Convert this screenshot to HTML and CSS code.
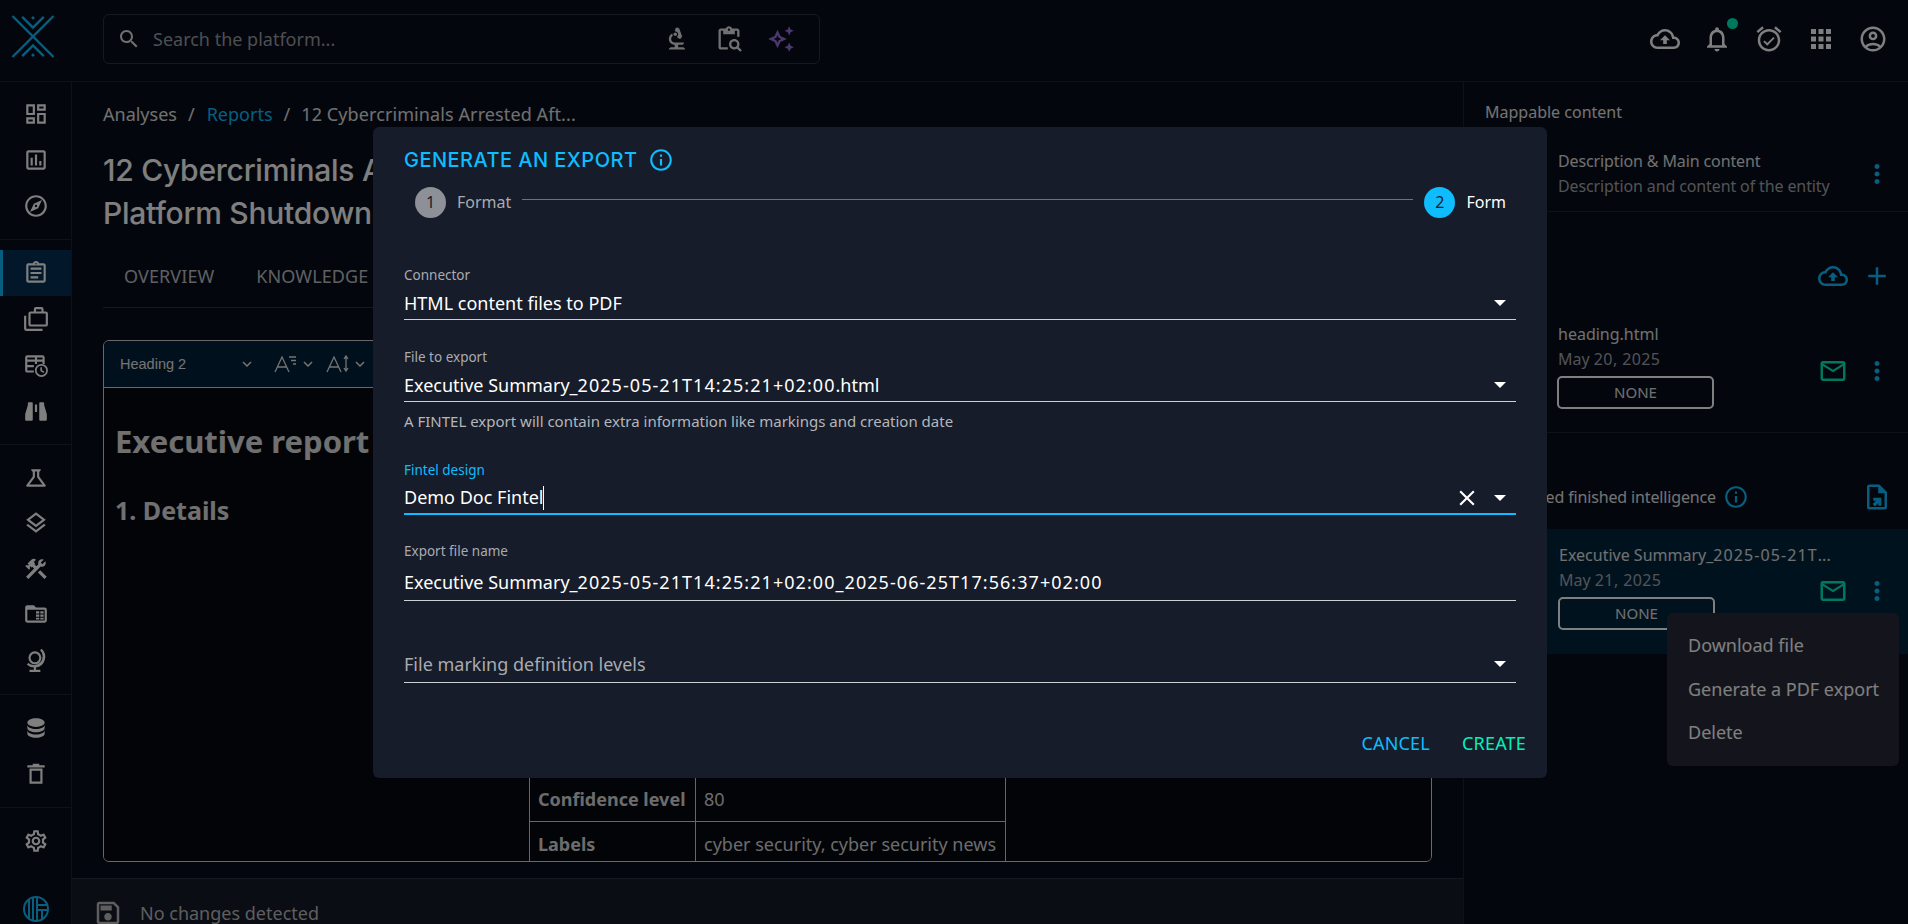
FILE: index.html
```html
<!DOCTYPE html>
<html lang="en">
<head>
<meta charset="utf-8">
<title>Generate an export</title>
<link rel="stylesheet" href="styles.css">
</head>
<body>
<div class="app">
  <header class="topbar">
    <div class="logo-cell">
      <svg class="logo" viewBox="0 0 46 46"><path d="M2 2 44 44M44 2 2 44M12 3 23 14 34 3M12 43 23 32 34 43" fill="none" stroke="#0fbcff" stroke-width="2.4"/><path d="M23 2l2 2-2 2-2-2zM23 40l2 2-2 2-2-2z" fill="#0fbcff"/></svg>
    </div>
    <div class="search">
      <svg class="ic24" viewBox="0 0 24 24"><path d="M15.5 14h-.79l-.28-.27C15.41 12.59 16 11.11 16 9.5 16 5.91 13.09 3 9.5 3S3 5.91 3 9.5 5.91 16 9.5 16c1.61 0 3.09-.59 4.23-1.57l.27.28v.79l5 4.99L20.49 19l-4.99-5zm-6 0C7.01 14 5 11.99 5 9.5S7.01 5 9.5 5 14 7.01 14 9.5 11.99 14 9.5 14z"/></svg>
      <span class="search-text">Search the platform...</span>
      <span class="search-tools">
        <svg class="ic28" viewBox="0 0 24 24"><path d="M7 19c-1.1 0-2 .9-2 2h14c0-1.1-.9-2-2-2h-4v-2h3c1.1 0 2-.9 2-2h-8c-1.66 0-3-1.34-3-3 0-1.09.59-2.04 1.46-2.56C8.17 9.03 8 8.54 8 8c0-.21.04-.42.09-.62C6.28 8.13 5 9.92 5 12c0 2.76 2.24 5 5 5v2H7zM10.56 5.51C11.91 5.54 13 6.64 13 8c0 .75-.33 1.41-.85 1.87l.59 1.62.94-.34.34.94 1.88-.68-.34-.94.94-.34-2.74-7.52-.94.34-.34-.94-1.88.68.34.94-.94.35.56 1.53z"/><circle cx="10.5" cy="8" r="1.5"/></svg>
        <svg class="ic28" viewBox="0 0 24 24"><path d="M5 5h2v3h10V5h2v5h2V5c0-1.1-.9-2-2-2h-4.18C14.4 1.84 13.3 1 12 1s-2.4.84-2.82 2H5c-1.1 0-2 .9-2 2v14c0 1.1.9 2 2 2h6v-2H5V5zm7-2c.55 0 1 .45 1 1s-.45 1-1 1-1-.45-1-1 .45-1 1-1zM20.3 18.9c.4-.7.7-1.5.7-2.4 0-2.5-2-4.5-4.5-4.5S12 14 12 16.5s2 4.5 4.5 4.5c.9 0 1.7-.3 2.4-.7l2.7 2.7 1.4-1.4-2.7-2.7zm-3.8.1c-1.4 0-2.5-1.1-2.5-2.5s1.1-2.5 2.5-2.5 2.5 1.1 2.5 2.5-1.1 2.5-2.5 2.5z"/></svg>
        <svg class="ic28 purple" viewBox="0 0 24 24"><path d="m19 9 1.25-2.75L23 5l-2.75-1.25L19 1l-1.25 2.75L15 5l2.75 1.25L19 9zm-7.5.5L9 4 6.5 9.5 1 12l5.5 2.5L9 20l2.5-5.5L17 12l-5.5-2.5zm-1.51 3.49L9 15.17l-.99-2.18L5.83 12l2.18-.99L9 8.83l.99 2.18 2.18.99-2.18.99zM19 15l-1.25 2.75L15 19l2.75 1.25L19 23l1.25-2.75L23 19l-2.75-1.25L19 15z"/></svg>
      </span>
    </div>
    <div class="top-actions">
      <svg class="ic30" viewBox="0 0 24 24"><path d="M19.35 10.04C18.67 6.59 15.64 4 12 4 9.11 4 6.6 5.64 5.35 8.04 2.34 8.36 0 10.91 0 14c0 3.31 2.69 6 6 6h13c2.76 0 5-2.24 5-5 0-2.64-2.05-4.78-4.65-4.96zM19 18H6c-2.21 0-4-1.79-4-4 0-2.05 1.53-3.76 3.56-3.97l1.07-.11.5-.95C8.08 7.14 9.94 6 12 6c2.62 0 4.88 1.86 5.39 4.43l.3 1.5 1.53.11c1.56.1 2.78 1.41 2.78 2.96 0 1.65-1.35 3-3 3zM8 13h2.55v3h2.9v-3H16l-4-4z"/></svg>
      <span class="bell">
        <svg class="ic30" viewBox="0 0 24 24"><path d="M12 22c1.1 0 2-.9 2-2h-4c0 1.1.9 2 2 2zm6-6v-5c0-3.07-1.63-5.64-4.5-6.32V4c0-.83-.67-1.5-1.5-1.5s-1.5.67-1.5 1.5v.68C7.64 5.36 6 7.92 6 11v5l-2 2v1h16v-1l-2-2zm-2 1H8v-6c0-2.48 1.51-4.5 4-4.5s4 2.02 4 4.5v6z"/></svg>
        <i class="dot"></i>
      </span>
      <svg class="ic30" viewBox="0 0 24 24"><path d="M16.54 11.4l-1.06-1.06-4.88 4.88-2.12-2.12-1.06 1.06 3.18 3.18zM22 5.72l-4.6-3.86-1.29 1.53 4.6 3.86zM7.88 3.39 6.6 1.86 2 5.71l1.29 1.53zM12 4c-4.97 0-9 4.03-9 9s4.03 9 9 9 9-4.03 9-9-4.03-9-9-9zm0 16c-3.86 0-7-3.14-7-7s3.14-7 7-7 7 3.14 7 7-3.14 7-7 7z"/></svg>
      <svg class="ic30" viewBox="0 0 24 24"><path d="M4 8h4V4H4v4zm6 12h4v-4h-4v4zm-6 0h4v-4H4v4zm0-6h4v-4H4v4zm6 0h4v-4h-4v4zm6-10v4h4V4h-4zm-6 4h4V4h-4v4zm6 6h4v-4h-4v4zm0 6h4v-4h-4v4z"/></svg>
      <svg class="ic30" viewBox="0 0 24 24"><path d="M12 2C6.48 2 2 6.48 2 12s4.48 10 10 10 10-4.48 10-10S17.52 2 12 2zM7.35 18.5C8.66 17.56 10.26 17 12 17s3.34.56 4.65 1.5c-1.31.94-2.91 1.5-4.65 1.5s-3.34-.56-4.65-1.5zm10.79-1.38C16.45 15.8 14.32 15 12 15s-4.45.8-6.14 2.12C4.7 15.73 4 13.95 4 12c0-4.42 3.58-8 8-8s8 3.58 8 8c0 1.95-.7 3.73-1.86 5.12zM12 6c-1.93 0-3.5 1.57-3.5 3.5S10.07 13 12 13s3.5-1.57 3.5-3.5S13.93 6 12 6zm0 5c-.83 0-1.5-.67-1.5-1.5S11.17 8 12 8s1.5.67 1.5 1.5S12.83 11 12 11z"/></svg>
    </div>
  </header>

  <div class="body">
    <nav class="sidebar">
      <div class="nav-group first">
        <div class="nav-row"><svg class="ic26" viewBox="0 0 24 24"><path d="M19 5v2h-4V5h4M9 5v6H5V5h4m10 8v6h-4v-6h4M9 17v2H5v-2h4M21 3h-8v6h8V3zM11 3H3v10h8V3zm10 8h-8v10h8V11zm-10 4H3v6h8v-6z"/></svg></div>
        <div class="nav-row"><svg class="ic26" viewBox="0 0 24 24"><path d="M19 3H5c-1.1 0-2 .9-2 2v14c0 1.1.9 2 2 2h14c1.1 0 2-.9 2-2V5c0-1.1-.9-2-2-2zm0 16H5V5h14v14zM7 10h2v7H7zm4-3h2v10h-2zm4 6h2v4h-2z"/></svg></div>
        <div class="nav-row"><svg class="ic26" viewBox="0 0 24 24"><path d="M12 2C6.48 2 2 6.48 2 12s4.48 10 10 10 10-4.48 10-10S17.52 2 12 2zm0 18c-4.41 0-8-3.59-8-8s3.59-8 8-8 8 3.59 8 8-3.59 8-8 8zm-5.5-2.5l7.51-3.49L17.5 6.5 9.99 9.99 6.5 17.5zm5.5-6.6c.61 0 1.1.49 1.1 1.1s-.49 1.1-1.1 1.1-1.1-.49-1.1-1.1.49-1.1 1.1-1.1z"/></svg></div>
      </div>
      <div class="nav-group">
        <div class="nav-row active"><svg class="ic26" viewBox="0 0 24 24"><path d="M7 15h7v2H7zm0-4h10v2H7zm0-4h10v2H7zm12-4h-4.18C14.4 1.84 13.3 1 12 1c-1.3 0-2.4.84-2.82 2H5c-.14 0-.27.01-.4.04-.39.08-.74.28-1.01.55-.18.18-.33.4-.43.64-.1.23-.16.49-.16.77v14c0 .27.06.54.16.78s.25.45.43.64c.27.27.62.47 1.01.55.13.02.26.03.4.03h14c1.1 0 2-.9 2-2V5c0-1.1-.9-2-2-2zm-7-.25c.41 0 .75.34.75.75s-.34.75-.75.75-.75-.34-.75-.75.34-.75.75-.75zM19 19H5V5h14v14z"/></svg></div>
        <div class="nav-row"><svg class="ic26" viewBox="0 0 24 24"><path d="M19 5V3a2 2 0 0 0-2-2h-5a2 2 0 0 0-2 2v2H7a2 2 0 0 0-2 2v10a2 2 0 0 0 2 2h14a2 2 0 0 0 2-2V7a2 2 0 0 0-2-2h-2zm-7-2h5v2h-5V3zM7 7h14v10H7V7zM1 9h2v12h15v2H3a2 2 0 0 1-2-2V9z"/></svg></div>
        <div class="nav-row"><svg class="ic26 even" viewBox="0 0 24 24"><path d="M4 3h14a2 2 0 0 1 2 2v6h-2V9h-5v2h-2V9H4v3h6v2H4v3h6v2H4a2 2 0 0 1-2-2V5a2 2 0 0 1 2-2zM4 5v2h7V5zM13 5v2h5V5z"/><path d="M17 11a6 6 0 1 0 0 12 6 6 0 0 0 0-12zm0 10.400a4.400 4.400 0 1 1 0-8.800 4.400 4.400 0 0 1 0 8.800zM17.500 14H16v3.600l2.800 1.700.8-1.200-2.100-1.300z"/></svg></div>
        <div class="nav-row"><svg class="ic26" viewBox="0 0 24 24"><path d="M11,6H13V13H11V6M9,20A1,1 0 0,1 8,21H3A1,1 0 0,1 2,20V15L4.500,6.500V4.500L5,4H8.500L9,4.500V20M15,20V4.500L15.500,4H19L19.500,4.500V6.500L22,15V20A1,1 0 0,1 21,21H16A1,1 0 0,1 15,20Z"/></svg></div>
      </div>
      <div class="nav-group dense">
        <div class="nav-row"><svg class="ic26" viewBox="0 0 24 24"><path d="M13 11.33 18 18H6l5-6.67V6h2m2.96-2H8.04c-.42 0-.65.48-.39.81L9 6.5v4.17L3.2 18.4c-.49.66-.02 1.6.8 1.6h16c.82 0 1.29-.94.8-1.6L15 10.67V6.5l1.35-1.69c.26-.33.03-.81-.39-.81z"/></svg></div>
        <div class="nav-row"><svg class="ic26" viewBox="0 0 24 24"><path d="m11.99 18.54-7.37-5.73L3 14.07l9 7 9-7-1.63-1.27zM12 16l7.36-5.73L21 9l-9-7-9 7 1.63 1.27L12 16zm0-11.47L17.74 9 12 13.47 6.26 9 12 4.53z"/></svg></div>
        <div class="nav-row"><svg class="ic26" viewBox="0 0 24 24"><path d="m13.7826 15.1719 2.1213-2.1213 5.9963 5.9962-2.1213 2.1213zM17.5 10c1.93 0 3.5-1.57 3.5-3.5 0-.58-.16-1.12-.41-1.6l-2.7 2.7-1.49-1.49 2.7-2.7c-.48-.25-1.02-.41-1.6-.41C15.57 3 14 4.57 14 6.5c0 .41.08.8.21 1.16l-1.85 1.85-1.78-1.78.71-.71-1.41-1.41L12 3.49c-1.17-1.17-3.07-1.17-4.24 0L4.22 7.03l1.41 1.41H2.81l-.71.71 3.54 3.54.71-.71V9.15l1.41 1.41.71-.71 1.78 1.78-7.41 7.41 2.12 2.12L16.34 9.79c.36.13.75.21 1.16.21z"/></svg></div>
        <div class="nav-row"><svg class="ic26 even" viewBox="0 0 24 24"><path d="M4 4h6l2 2h8a2 2 0 0 1 2 2v10a2 2 0 0 1-2 2H4a2 2 0 0 1-2-2V6a2 2 0 0 1 2-2zM4 8v10h16V8zM12 9.500h3v2h-3zM16 9.500h3v2h-3zM12 12.500h3v2h-3zM16 12.500h3v2h-3zM12 15.500h3v1.500h-3zM16 15.500h3v1.500h-3z"/></svg></div>
        <div class="nav-row"><svg class="ic26" viewBox="0 0 24 24"><path d="M11 4a6 6 0 1 0 0 12 6 6 0 0 0 0-12zm0 2a4 4 0 1 1 0 8 4 4 0 0 1 0-8zM17.200 1.600l-1.400 1.400a8 8 0 0 1-10.900 11.700l-1.400 1.400A10 10 0 0 0 10 19v2H6v2h10v-2h-4v-2.100A10 10 0 0 0 17.200 1.600z"/></svg></div>
      </div>
      <div class="nav-group">
        <div class="nav-row"><svg class="ic26" viewBox="0 0 24 24"><path d="M12,3C7.58,3 4,4.79 4,7C4,9.21 7.58,11 12,11C16.42,11 20,9.21 20,7C20,4.79 16.42,3 12,3M4,9V12C4,14.21 7.58,16 12,16C16.42,16 20,14.21 20,12V9C20,11.21 16.42,13 12,13C7.58,13 4,11.21 4,9M4,14V17C4,19.21 7.58,21 12,21C16.42,21 20,19.21 20,17V14C20,16.21 16.42,18 12,18C7.58,18 4,16.21 4,14Z"/></svg></div>
        <div class="nav-row"><svg class="ic26 even" viewBox="0 0 24 24"><path d="M4 4h16v2H4zM6 7h12v14H6zM8 9v10h8V9zM9 2.500h6V4H9z"/></svg></div>
      </div>
      <div class="nav-group last">
        <div class="nav-row"><svg class="ic26" viewBox="0 0 24 24"><path d="M19.43 12.98c.04-.32.07-.64.07-.98 0-.34-.03-.66-.07-.98l2.11-1.65c.19-.15.24-.42.12-.64l-2-3.46c-.09-.16-.26-.25-.44-.25-.06 0-.12.01-.17.03l-2.49 1c-.52-.4-1.08-.73-1.69-.98l-.38-2.65C14.46 2.18 14.25 2 14 2h-4c-.25 0-.46.18-.49.42l-.38 2.65c-.61.25-1.17.59-1.69.98l-2.49-1c-.06-.02-.12-.03-.18-.03-.17 0-.34.09-.43.25l-2 3.46c-.13.22-.07.49.12.64l2.11 1.65c-.04.32-.07.65-.07.98 0 .33.03.66.07.98l-2.11 1.65c-.19.15-.24.42-.12.64l2 3.46c.09.16.26.25.44.25.06 0 .12-.01.17-.03l2.49-1c.52.4 1.08.73 1.69.98l.38 2.65c.03.24.24.42.49.42h4c.25 0 .46-.18.49-.42l.38-2.65c.61-.25 1.17-.59 1.69-.98l2.49 1c.06.02.12.03.18.03.17 0 .34-.09.43-.25l2-3.46c.12-.22.07-.49-.12-.64l-2.11-1.65zm-1.98-1.71c.04.31.05.52.05.73 0 .21-.02.43-.05.73l-.14 1.13.89.7 1.08.84-.7 1.21-1.27-.51-1.04-.42-.9.68c-.43.32-.84.56-1.25.73l-1.06.43-.16 1.13-.2 1.35h-1.4l-.19-1.35-.16-1.13-1.06-.43c-.43-.18-.83-.41-1.23-.71l-.91-.7-1.06.43-1.27.51-.7-1.21 1.08-.84.89-.7-.14-1.13c-.03-.31-.05-.54-.05-.74s.02-.43.05-.73l.14-1.13-.89-.7-1.08-.84.7-1.21 1.27.51 1.04.42.9-.68c.43-.32.84-.56 1.25-.73l1.06-.43.16-1.13.2-1.35h1.39l.19 1.35.16 1.13 1.06.43c.43.18.83.41 1.23.71l.91.7 1.06-.43 1.27-.51.7 1.21-1.07.85-.89.7.14 1.13zM12 8c-2.21 0-4 1.79-4 4s1.79 4 4 4 4-1.79 4-4-1.79-4-4-4zm0 6c-1.1 0-2-.9-2-2s.9-2 2-2 2 .9 2 2-.9 2-2 2z"/></svg></div>
        <svg class="brand" viewBox="0 0 26 26"><circle cx="13" cy="13" r="12" fill="none" stroke="#0fbcff" stroke-width="2"/><path d="M6 4v18M10 2v22M14 2v22M14 9h11M14 14h10M19 14v9" fill="none" stroke="#0fbcff" stroke-width="2"/></svg>
      </div>
    </nav>

    <main class="main">
      <div class="main-scroll">
        <div class="crumbs"><span>Analyses</span><span class="sep">/</span><span class="crumb-link">Reports</span><span class="sep">/</span><span class="crumb-cur">12 Cybercriminals Arrested Aft...</span></div>
        <h1 class="title">12 Cybercriminals Arrested After Silk Road-Like Dark Web Drug<br>Platform Shutdown</h1>
        <div class="tabs"><span>OVERVIEW</span><span>KNOWLEDGE</span><span>CONTENT</span></div>
        <section class="editor">
          <div class="toolbar">
            <span class="tb-heading">Heading 2</span>
            <svg class="tb-chev wide" viewBox="0 0 10 6"><path d="M1 1l4 4 4-4"/></svg>
            <svg class="tb-ic" viewBox="0 0 24 20"><path d="M1 18 8 3l7 15M3.5 13h9M15 3h7M17 6.5h5M19 10h3"/></svg>
            <svg class="tb-chev mid" viewBox="0 0 10 6"><path d="M1 1l4 4 4-4"/></svg>
            <svg class="tb-ic" viewBox="0 0 24 20"><path d="M1 18 8 3l7 15M3.5 13h9M20 2v15M18 5l2-3 2 3M18 14l2 3 2-3"/></svg>
            <svg class="tb-chev" viewBox="0 0 10 6"><path d="M1 1l4 4 4-4"/></svg>
          </div>
          <div class="doc">
            <h2 class="doc-h1">Executive report</h2>
            <h3 class="doc-h2">1. Details</h3>
            <table class="doc-table">
              <tr><th>Confidence level</th><td>80</td></tr>
              <tr class="short"><th>Labels</th><td>cyber security, cyber security news</td></tr>
            </table>
          </div>
        </section>
      </div>
      <footer class="savebar">
        <svg class="ic30" viewBox="0 0 24 24"><path d="M17 3H5c-1.11 0-2 .9-2 2v14c0 1.1.89 2 2 2h14c1.1 0 2-.9 2-2V7l-4-4zm2 16H5V5h11.17L19 7.83V19zm-7-7c-1.66 0-3 1.34-3 3s1.34 3 3 3 3-1.34 3-3-1.34-3-3-3zM6 6h9v4H6z"/></svg>
        <span>No changes detected</span>
      </footer>
    </main>

    <aside class="panel">
      <section class="p-sec first">
        <div class="p-title">Mappable content</div>
        <div class="p-item mapp">
          <div class="p-text"><div class="p-name tight">Description &amp; Main content</div><div class="p-date tight">Description and content of the entity</div></div>
          <svg class="ic30 blue kebab" viewBox="0 0 24 24"><path d="M12 8c1.1 0 2-.9 2-2s-.9-2-2-2-2 .9-2 2 .9 2 2 2zm0 2c-1.1 0-2 .9-2 2s.9 2 2 2 2-.9 2-2-.9-2-2-2zm0 6c-1.1 0-2 .9-2 2s.9 2 2 2 2-.9 2-2-.9-2-2-2z"/></svg>
        </div>
      </section>
      <section class="p-sec second">
        <div class="p-head">
          <span class="p-title">Content</span>
          <span class="p-tools">
            <svg class="ic30 blue" viewBox="0 0 24 24"><path d="M19.35 10.04C18.67 6.59 15.64 4 12 4 9.11 4 6.6 5.64 5.35 8.04 2.34 8.36 0 10.91 0 14c0 3.31 2.69 6 6 6h13c2.76 0 5-2.24 5-5 0-2.64-2.05-4.78-4.65-4.96zM19 18H6c-2.21 0-4-1.79-4-4 0-2.05 1.53-3.76 3.56-3.97l1.07-.11.5-.95C8.08 7.14 9.94 6 12 6c2.62 0 4.88 1.86 5.39 4.43l.3 1.5 1.53.11c1.56.1 2.78 1.41 2.78 2.96 0 1.65-1.35 3-3 3zM8 13h2.55v3h2.9v-3H16l-4-4z"/></svg>
            <svg class="ic30 blue" viewBox="0 0 24 24"><path d="M19 13h-6v6h-2v-6H5v-2h6V5h2v6h6v2z"/></svg>
          </span>
        </div>
        <div class="p-item file">
          <div class="p-text"><div class="p-name">heading.html</div><div class="p-date">May <span class="num-sm">20, 2025</span></div><div class="chip">NONE</div></div>
          <span class="p-tools row-tools">
            <svg class="ic30 green" viewBox="0 0 24 24"><path d="M22 6c0-1.1-.9-2-2-2H4c-1.1 0-2 .9-2 2v12c0 1.1.9 2 2 2h16c1.1 0 2-.9 2-2V6zm-2 0-8 5-8-5h16zm0 12H4V8l8 5 8-5v10z"/></svg>
            <svg class="ic30 blue" viewBox="0 0 24 24"><path d="M12 8c1.1 0 2-.9 2-2s-.9-2-2-2-2 .9-2 2 .9 2 2 2zm0 2c-1.1 0-2 .9-2 2s.9 2 2 2 2-.9 2-2-.9-2-2-2zm0 6c-1.1 0-2 .9-2 2s.9 2 2 2 2-.9 2-2-.9-2-2-2z"/></svg>
          </span>
        </div>
      </section>
      <section class="p-third">
        <div class="p-head third">
          <span class="p-title tight2">Associated finished intelligence</span>
          <svg class="ic26 blue" viewBox="0 0 24 24"><path d="M11 7h2v2h-2zm0 4h2v6h-2zm1-9C6.48 2 2 6.48 2 12s4.48 10 10 10 10-4.48 10-10S17.52 2 12 2zm0 18c-4.41 0-8-3.59-8-8s3.59-8 8-8 8 3.59 8 8-3.59 8-8 8z"/></svg>
          <svg class="ic30 blue file-export" viewBox="0 0 24 24"><path d="M14 2H6a2 2 0 0 0-2 2v16a2 2 0 0 0 2 2h12a2 2 0 0 0 2-2V8l-6-6zm4 18H6V4h7v5h5v11z"/><path d="M8.500 17.600 11.100 15H9v-2.500h6.500V19H13v-2.100L10.300 19.500z"/></svg>
        </div>
        <div class="p-item file selected">
          <div class="p-text"><div class="p-name">Executive Summary_<span class="num-md">2025-05-21T</span>...</div><div class="p-date">May <span class="num-sm">21, 2025</span></div><div class="chip">NONE</div></div>
          <span class="p-tools sel-tools">
            <svg class="ic30 green" viewBox="0 0 24 24"><path d="M22 6c0-1.1-.9-2-2-2H4c-1.1 0-2 .9-2 2v12c0 1.1.9 2 2 2h16c1.1 0 2-.9 2-2V6zm-2 0-8 5-8-5h16zm0 12H4V8l8 5 8-5v10z"/></svg>
            <svg class="ic30 blue" viewBox="0 0 24 24"><path d="M12 8c1.1 0 2-.9 2-2s-.9-2-2-2-2 .9-2 2 .9 2 2 2zm0 2c-1.1 0-2 .9-2 2s.9 2 2 2 2-.9 2-2-.9-2-2-2zm0 6c-1.1 0-2 .9-2 2s.9 2 2 2 2-.9 2-2-.9-2-2-2z"/></svg>
          </span>
        </div>
      </section>
    </aside>
  </div>

  <ul class="menu">
    <li>Download file</li>
    <li>Generate a PDF export</li>
    <li>Delete</li>
  </ul>

  <div class="backdrop"></div>

  <div class="modal">
    <div class="m-title"><span>GENERATE AN EXPORT</span><svg class="ic26" viewBox="0 0 24 24"><path d="M11 7h2v2h-2zm0 4h2v6h-2zm1-9C6.48 2 2 6.48 2 12s4.48 10 10 10 10-4.48 10-10S17.52 2 12 2zm0 18c-4.41 0-8-3.59-8-8s3.59-8 8-8 8 3.59 8 8-3.59 8-8 8z"/></svg></div>
    <div class="stepper">
      <span class="step-dot">1</span><span class="step-label">Format</span>
      <span class="step-line"></span>
      <span class="step-dot on">2</span><span class="step-label on">Form</span>
    </div>
    <div class="field">
      <label class="f-label">Connector</label>
      <div class="f-value"><span class="f-text">HTML content files to PDF</span><i class="caret"></i></div>
    </div>
    <div class="field">
      <label class="f-label">File to export</label>
      <div class="f-value"><span class="f-text">Executive Summary_<span class="num">2025-05-21T14:25:21+02:00</span>.html</span><i class="caret"></i></div>
    </div>
    <p class="f-help">A FINTEL export will contain extra information like markings and creation date</p>
    <div class="field focus">
      <label class="f-label">Fintel design</label>
      <div class="f-value"><span class="f-text">Demo Doc Fintel<i class="cursor"></i></span>
        <svg class="clear" viewBox="0 0 24 24"><path d="M19 6.41 17.59 5 12 10.59 6.41 5 5 6.41 10.59 12 5 17.59 6.41 19 12 13.41 17.59 19 19 17.59 13.41 12z"/></svg>
        <i class="caret"></i></div>
    </div>
    <div class="field tall">
      <label class="f-label">Export file name</label>
      <div class="f-value"><span class="f-text">Executive Summary_<span class="num">2025-05-21T14:25:21+02:00_2025-06-25T17:56:37+02:00</span></span></div>
    </div>
    <div class="field bare">
      <div class="f-value"><span class="f-text muted">File marking definition levels</span><i class="caret"></i></div>
    </div>
    <div class="m-actions"><span class="btn-cancel">CANCEL</span><span class="btn-create">CREATE</span></div>
  </div>
</div>
</body>
</html>
```

FILE: styles.css
```css
* { box-sizing: border-box; }
html, body { margin: 0; height: 100%; overflow: hidden; }
body { font-family: "Noto Sans", "Liberation Sans", sans-serif; color: #fff; background: #070d19; }
svg { fill: currentColor; display: block; flex: none; }
.even { fill-rule: evenodd; }
.ic24 { width: 24px; height: 24px; }
.ic26 { width: 26px; height: 26px; }
.ic28 { width: 28px; height: 28px; }
.ic30 { width: 30px; height: 30px; }
.blue { color: #0fbcff; }
.green { color: #00f1bd; }
.purple { color: #9a6fd8; }
.num { letter-spacing: 1.05px; }
.num-md { letter-spacing: 1.1px; }
.num-sm { letter-spacing: .4px; }
.tight { letter-spacing: -.12px; }
.tight2 { letter-spacing: -.15px; }

.app { position: relative; width: 1908px; height: 924px; overflow: hidden; display: flex; flex-direction: column; }

.topbar { height: 82px; flex: none; display: flex; align-items: flex-start; border-bottom: 1px solid #1c2230; }
.logo-cell { width: 103px; padding: 14px 0 0 10px; flex: none; }
.logo { width: 46px; height: 45px; }
.search { margin-top: 14px; width: 717px; height: 50px; border: 1px solid #2e333f; border-radius: 6px; display: flex; align-items: center; padding: 0 14px 0 13px; color: #e0e0e0; }
.search-text { margin-left: 12px; font-size: 18px; color: #9b9da3; flex: 1; }
.search-tools { display: flex; gap: 24px; margin-right: 10px; }
.top-actions { margin-left: auto; margin-top: 24px; padding-right: 20px; display: flex; gap: 22px; color: #fff; }
.bell { position: relative; display: block; }
.dot { position: absolute; top: -6px; right: -6px; width: 11px; height: 11px; border-radius: 50%; background: #00f1bd; }

.body { flex: 1; display: flex; min-height: 0; }

.sidebar { width: 72px; flex: none; border-right: 1px solid #1c2230; display: flex; flex-direction: column; color: #fff; }
.nav-group { padding: 10px 0; border-bottom: 1px solid #1c2230; }
.nav-group.first { padding-top: 9px; }
.nav-group.dense { padding-bottom: 11.5px; }
.nav-group.dense .nav-row { height: 45.5px; }
.nav-group.last { border-bottom: 0; padding: 10px 0 0; }
.nav-row { height: 46px; display: flex; align-items: center; justify-content: center; }
.nav-row.active { background: #043054; box-shadow: inset 3px 0 0 #0fbcff; }
.brand { width: 26px; height: 26px; margin: 32px auto 0; }

.main { width: 1391px; flex: none; display: flex; flex-direction: column; }
.main-scroll { padding: 21px 31px 0; height: 796px; flex: none; }
.crumbs { display: flex; font-size: 18px; line-height: 22px; color: #e0e0e0; }
.sep { margin: 0 11px; }
.crumb-link { color: #0fbcff; margin-left: 1px; }
.crumb-cur { letter-spacing: .1px; }
.title { margin: 24px 0 0; font-size: 30px; line-height: 43px; font-weight: 500; letter-spacing: -.25px; white-space: nowrap; overflow: hidden; font-family: "Inter", "Noto Sans", sans-serif; }
.tabs { margin-top: 8px; height: 65px; border-bottom: 1px solid #2b3140; padding: 22px 0 0 21px; display: flex; gap: 42px; font-size: 18px; letter-spacing: .1px; line-height: 22px; color: #bfc1c6; }
.editor { margin-top: 32px; height: 522px; border: 1px solid #d0d0d0; border-radius: 6px; display: flex; flex-direction: column; overflow: hidden; }
.toolbar { height: 47px; flex: none; background: #03203a; border-bottom: 1px solid #d0d0d0; display: flex; align-items: center; padding-left: 16px; font-family: "Liberation Sans", sans-serif; color: #e8e8e8; }
.tb-heading { font-size: 14.5px; width: 122px; }
.tb-chev { width: 10px; height: 6px; fill: none; stroke: currentColor; stroke-width: 1.5; margin-right: 8px; }
.tb-chev.wide { margin-right: 22px; }
.tb-chev.mid { margin-right: 13px; }
.tb-ic { width: 24px; height: 20px; fill: none; stroke: currentColor; stroke-width: 1.3; margin-right: 5px; }
.doc { flex: 1; min-height: 0; padding: 33px 11px 0; background: #050810; display: flex; flex-direction: column; }
.doc-h1 { margin: 0; font-size: 31px; line-height: 41px; font-weight: 700; color: #e0e0e0; }
.doc-h2 { margin: 32px 0 0; font-size: 25px; line-height: 32px; font-weight: 700; color: #e0e0e0; }
.doc-table { margin: auto auto 0; width: 477px; border-collapse: collapse; font-size: 18px; color: #d8d8d8; }
.doc-table th, .doc-table td { border: 1px solid #cfcfcf; border-bottom: 0; height: 44px; padding: 0 8px; text-align: left; }
.doc-table .short th, .doc-table .short td { height: 40px; padding-top: 5px; }
.doc-table th { width: 166px; font-weight: 700; }
.savebar { flex: 1; background: #141a28; border-top: 1px solid #2b3140; display: flex; align-items: flex-start; gap: 17px; padding: 19px 0 0 21px; font-size: 18px; line-height: 30px; color: #bcbcbc; overflow: hidden; }

.panel { flex: 1; border-left: 1px solid #1c2230; color: #e6e6e6; }
.p-title { font-size: 16px; line-height: 20px; display: block; }
.p-sec { border-bottom: 1px solid #1c2230; padding-left: 21px; }
.p-sec.first { height: 130px; padding-top: 20px; }
.p-sec.second { height: 221px; padding-top: 44px; }
.p-head { display: flex; align-items: center; height: 40px; padding-right: 16px; }
.p-tools { margin-left: auto; display: flex; gap: 14px; align-items: center; padding-right: 16px; }
.p-head .p-tools { padding-right: 0; }
.row-tools { margin-top: 11px; }
.sel-tools { margin-top: 8px; }
.p-head.third { margin: 48px 0 16px 21px; height: 32px; }
.p-head.third .ic26 { margin-left: 7px; }
.file-export { margin-left: auto; }
.p-item { display: flex; align-items: center; color: #e0e0e0; }
.p-text { flex: none; }
.p-name { font-size: 16px; line-height: 25px; white-space: nowrap; }
.p-date { font-size: 16px; line-height: 25px; color: #a5a7ac; }
.chip { width: 157px; height: 33px; margin-top: 4px; border: 2px solid #fff; border-radius: 5px; margin-left: -1px; font-size: 15px; line-height: 29px; text-align: center; }
.p-item.mapp { margin: 27px 0 0 73px; padding-right: 16px; }
.kebab { margin-left: auto; }
.p-item.file { margin-left: 73px; margin-top: 26px; }
.p-item.selected { margin: 0; padding: 14px 0 24px 95px; background: #03253f; }
.p-item.selected .p-text { width: 240px; }

.menu { position: absolute; left: 1667px; top: 613px; width: 232px; height: 153px; margin: 0; padding: 11px 0; list-style: none; background: #292b38; border-radius: 6px; font-size: 18px; color: #fff; }
.menu li { height: 43.5px; line-height: 43.5px; padding-left: 21px; }

.backdrop { position: absolute; inset: 0; background: rgba(0, 0, 0, .5); }

.modal { position: absolute; left: 373px; top: 127px; width: 1174px; height: 651px; background: #161c29; border-radius: 6px; padding: 18px 31px 0; }
.m-title { display: flex; align-items: center; gap: 11px; color: #0fbcff; font-size: 20px; line-height: 30px; font-weight: 500; letter-spacing: .47px; font-family: "Inter", "Noto Sans", sans-serif; }
.stepper { display: flex; align-items: flex-start; margin-top: 12px; padding: 0 10px 0 11px; font-size: 16px; }
.step-dot { width: 31px; height: 31px; border-radius: 50%; background: #8d9097; color: #161c29; font-size: 16px; line-height: 31px; text-align: center; }
.step-dot.on { background: #0fbcff; }
.step-label { margin-left: 11px; line-height: 31px; color: #a9abb1; }
.step-label.on { color: #fff; }
.step-line { flex: 1; height: 1px; background: #6f727a; margin: 12px 11px 0; }
.field { margin-top: 28px; height: 54px; display: flex; flex-direction: column; }
.stepper + .field { margin-top: 48px; }
.f-label { font-size: 13.5px; line-height: 16px; margin-top: 1px; color: #a9abb1; }
.f-value { margin-top: 3px; height: 34px; padding-top: 1px; border-bottom: 1px solid #cfd0d4; display: flex; align-items: center; font-size: 18px; color: #fff; }
.f-text { flex: 1; white-space: nowrap; position: relative; }
.f-text.muted { color: #a9abb1; }
.caret { width: 0; height: 0; border-left: 6.5px solid transparent; border-right: 6.5px solid transparent; border-top: 6.5px solid #fff; margin-right: 10px; }
.f-help { margin: 9px 0 0; font-size: 15px; line-height: 20px; color: #b4b6bb; }
.field.focus { margin-top: 30px; }
.field.focus .f-label { color: #0fbcff; }
.field.focus .f-value { border-bottom: 2px solid #0fbcff; }
.cursor { display: inline-block; width: 1px; height: 24px; background: #fff; vertical-align: -6px; }
.clear { width: 26px; height: 26px; margin-right: 14px; }
.field.tall { margin-top: 27px; height: 59px; }
.field.tall .f-value { margin-top: 3px; height: 39px; }
.field.bare { margin-top: 43px; height: 39px; }
.field.bare .f-value { margin: 0; height: 39px; }
.m-actions { margin: 50px -10px 0 0; display: flex; justify-content: flex-end; gap: 32px; font-size: 18px; line-height: 20px; letter-spacing: .2px; }
.btn-cancel { color: #0fbcff; }
.btn-create { color: #00f1bd; }
```
